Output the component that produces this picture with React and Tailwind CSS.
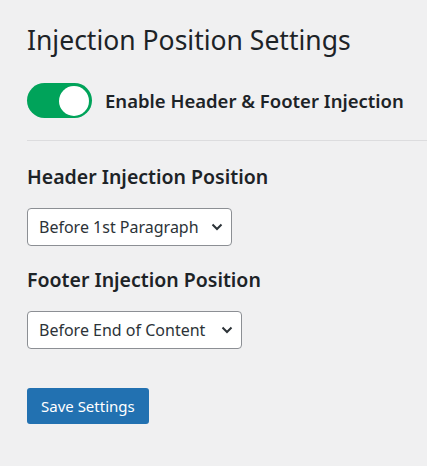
import React, { useState } from 'react'

function Toggle({ on, setOn }) {
    return (
        <button
            type="button"
            onClick={() => setOn(!on)}
            className={`w-[65px] h-[35px] rounded-full flex items-center px-[3px] shrink-0 ${on ? 'bg-[#00a35a] justify-end' : 'bg-[#8c8f94] justify-start'}`}
        >
            <span className="w-[30px] h-[30px] rounded-full bg-white block"></span>
        </button>
    )
}

function Select({ value, options, onChange, width }) {
    return (
        <div className={`relative ${width}`}>
            <select
                value={value}
                onChange={(e) => onChange(e.target.value)}
                className="appearance-none w-full h-[38px] bg-white border border-[#8c8f94] rounded-[4px] pl-[11px] pr-[24px] text-[16px] text-[#2c3338] outline-none"
            >
                {options.map((o) => (
                    <option key={o}>{o}</option>
                ))}
            </select>
            <svg className="absolute right-[9px] top-[14px] pointer-events-none" width="12" height="10" viewBox="0 0 12 10" fill="none">
                <path d="M1.5 2.5 L6 7 L10.5 2.5" stroke="#2c3338" strokeWidth="2" />
            </svg>
        </div>
    )
}

export default function App() {
    const [enabled, setEnabled] = useState(true)
    const [header, setHeader] = useState('Before 1st Paragraph')
    const [footer, setFooter] = useState('Before End of Content')

    return (
        <div className="min-h-[466px] bg-[#f0f0f1] text-[#1d2327] pt-[20px] pl-[27px] font-['Noto_Sans',sans-serif]">
            <h1 className="text-[26.5px] leading-[40px] font-normal">Injection Position Settings</h1>

            <div className="flex items-center gap-[13px] mt-[23px]">
                <Toggle on={enabled} setOn={setEnabled} />
                <span className="text-[18.5px] font-semibold">Enable Header &amp; Footer Injection</span>
            </div>

            <div className="h-px bg-[#dcdcde] mt-[22px]"></div>

            <h2 className="text-[19.5px] font-semibold leading-[28px] mt-[22px]">Header Injection Position</h2>
            <div className="mt-[17px]">
                <Select
                    value={header}
                    onChange={setHeader}
                    width="w-[205px]"
                    options={['Before 1st Paragraph', 'After 1st Paragraph', 'Before Content']}
                />
            </div>

            <h2 className="text-[19.5px] font-semibold leading-[28px] mt-[20px]">Footer Injection Position</h2>
            <div className="mt-[17px]">
                <Select
                    value={footer}
                    onChange={setFooter}
                    width="w-[215px]"
                    options={['Before End of Content', 'After Content']}
                />
            </div>

            <button type="button" className="mt-[39px] h-[36px] px-[14px] bg-[#2271b1] text-white text-[15px] rounded-[3px]">
                Save Settings
            </button>
        </div>
    )
}
